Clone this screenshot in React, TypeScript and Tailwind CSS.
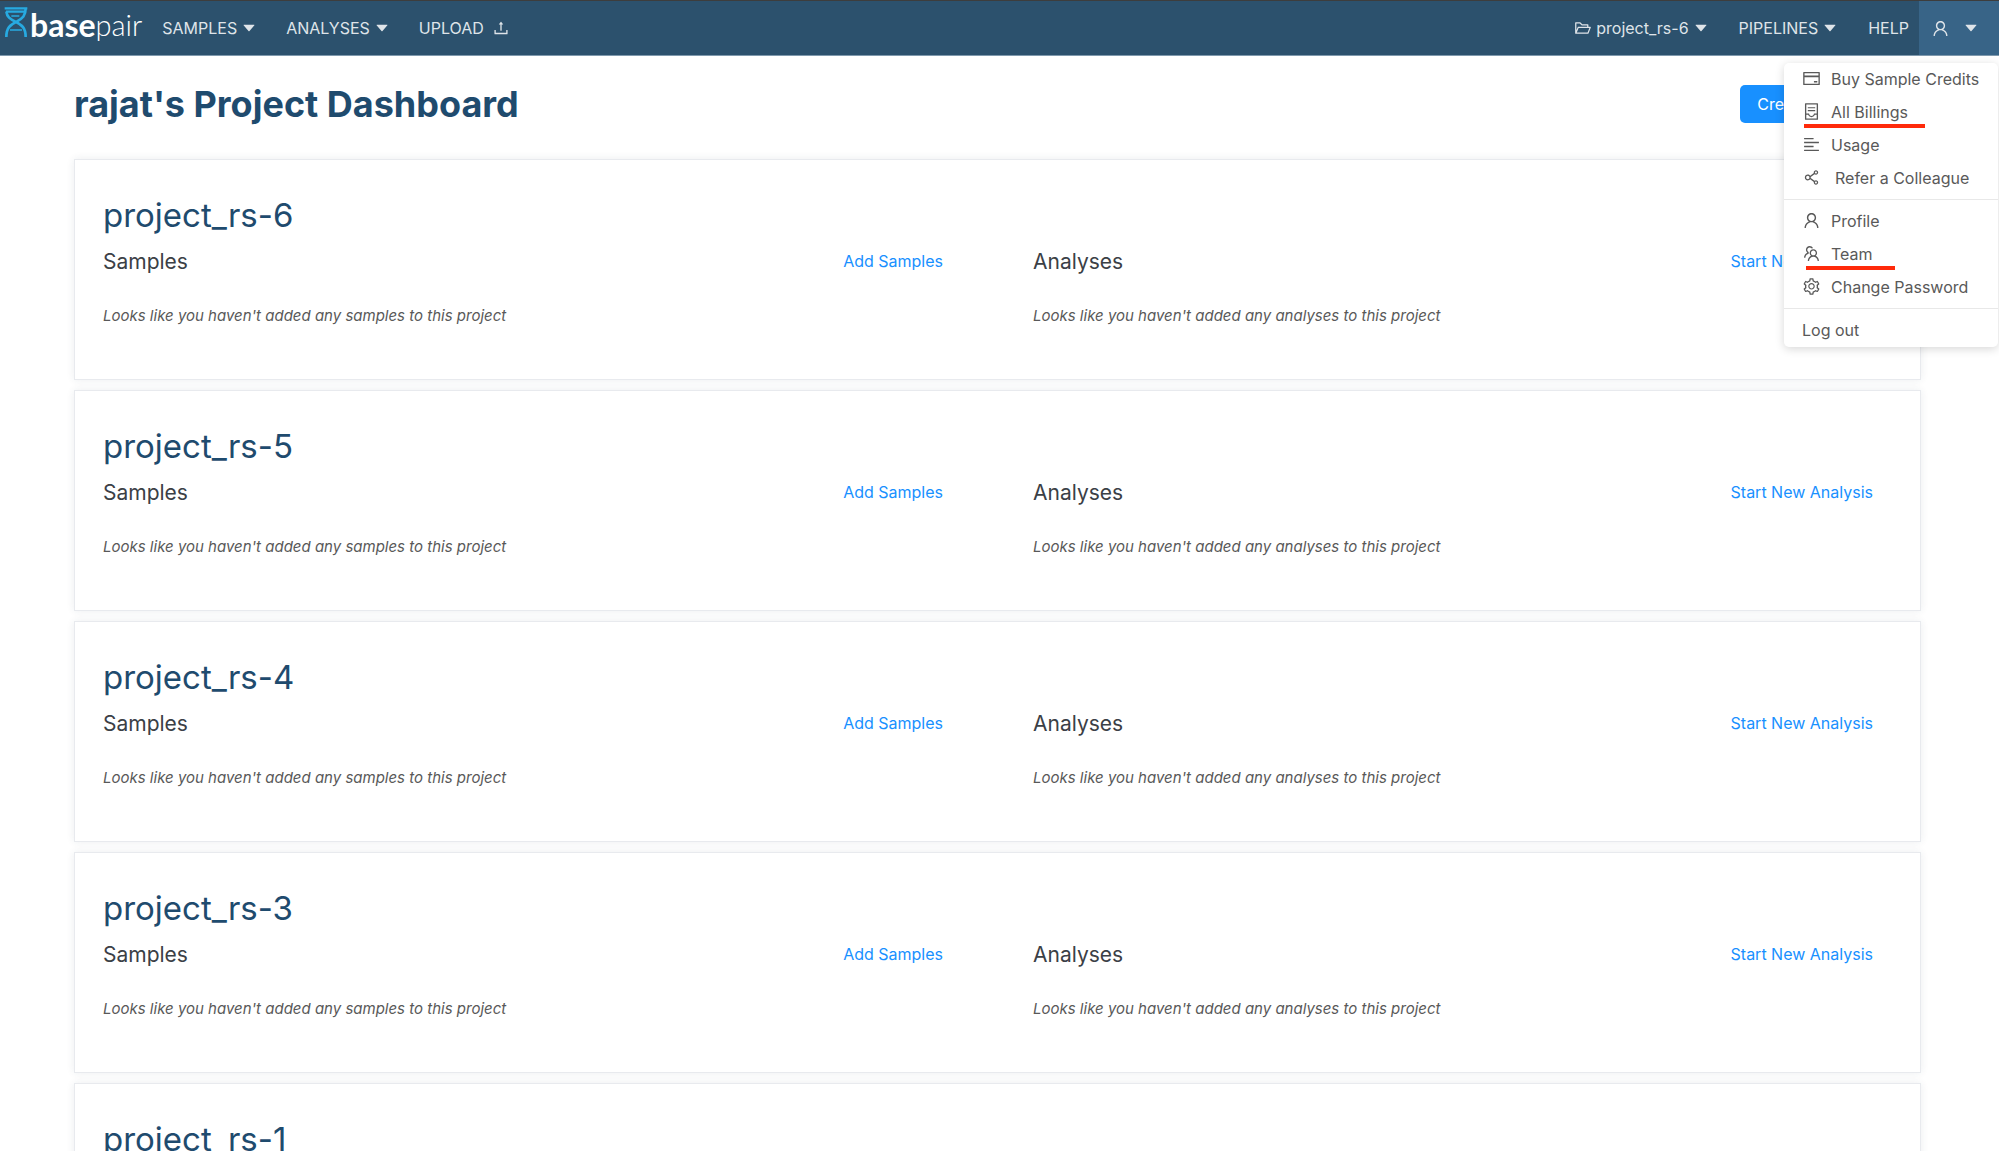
import type { ReactNode } from "react";
import {
  AiFillCaretDown,
  AiOutlineAlignLeft,
  AiOutlineContainer,
  AiOutlineCreditCard,
  AiOutlineFolderOpen,
  AiOutlineSetting,
  AiOutlineShareAlt,
  AiOutlineTeam,
  AiOutlineUpload,
  AiOutlineUser,
} from "react-icons/ai";

const projects = ["project_rs-6", "project_rs-5", "project_rs-4", "project_rs-3", "project_rs-1"];

function Logo() {
  return (
    <a href="#" aria-label="basepair" className="flex h-full items-start pt-1.5 text-white">
      <svg width="24" height="31" viewBox="0 0 72 93" fill="none" stroke="#27aae1" className="shrink-0">
        <path d="M2 4H70M6 14H66" strokeWidth="7" />
        <path d="M22 27H46M18 69H54" strokeWidth="5" />
        <path d="M65 4C65 26 56 34 38 44C18 54 7 62 7 90" strokeWidth="8" />
        <path d="M7 14C9 30 18 36 34 44C54 54 65 62 65 90" strokeWidth="8" />
      </svg>
      <span className="ml-0.5 font-[Lato] text-[32px] leading-9 font-bold">base</span>
      <span className="font-[Lato] text-[29px] leading-9 font-light">pair</span>
    </a>
  );
}

function NavButton({ children, gap = "gap-1" }: { children: ReactNode; gap?: string }) {
  return (
    <button type="button" className={`flex h-full items-center ${gap}`}>
      {children}
    </button>
  );
}

function MenuItem({ icon, label, inset, mark }: { icon?: ReactNode; label: string; inset?: boolean; mark?: string }) {
  return (
    <li className="relative">
      <a href="#" className="flex h-[33px] items-center gap-2.5 pb-0.5 pl-[18px] whitespace-nowrap">
        {icon}
        <span className={inset ? "pl-1" : ""}>{label}</span>
      </a>
      {mark && <span className={`absolute h-1 bg-[#ff2a0a] ${mark}`} />}
    </li>
  );
}

function UserMenu() {
  return (
    <ul className="absolute top-[63px] right-px z-10 w-[214px] rounded-[5px] bg-white text-base text-[#595959] shadow-[0_2px_10px_rgba(0,0,0,0.16)]">
      <MenuItem icon={<AiOutlineCreditCard size={19} />} label="Buy Sample Credits" />
      <MenuItem icon={<AiOutlineContainer size={19} />} label="All Billings" mark="top-7 left-5 w-[121px]" />
      <MenuItem icon={<AiOutlineAlignLeft size={19} />} label="Usage" />
      <MenuItem icon={<AiOutlineShareAlt size={19} />} label="Refer a Colleague" inset />
      <li role="separator" className="mt-1 mb-[5px] h-px bg-[#e8e8e8]" />
      <MenuItem icon={<AiOutlineUser size={19} />} label="Profile" />
      <MenuItem icon={<AiOutlineTeam size={19} />} label="Team" mark="top-7 left-[22px] w-[89px]" />
      <MenuItem icon={<AiOutlineSetting size={19} />} label="Change Password" />
      <li role="separator" className="mt-1 mb-[5px] h-px bg-[#e8e8e8]" />
      <MenuItem label="Log out" />
    </ul>
  );
}

function Section({ title, action, noun }: { title: string; action: string; noun: string }) {
  return (
    <section>
      <div className="flex items-start justify-between">
        <h3 className="text-[21px] leading-7 text-[#3b4046]">{title}</h3>
        <a href="#" className="text-base leading-[26px] text-[#1890ff]">
          {action}
        </a>
      </div>
      <p className="mt-7 text-[15px] leading-6 text-[#595959] italic">
        Looks like you haven't added any {noun} to this project
      </p>
    </section>
  );
}

function ProjectCard({ name }: { name: string }) {
  return (
    <article className="border border-[#e8eaee] bg-white pt-[34px] pr-[47px] pb-[51px] pl-7 shadow-[0_0_8px_rgba(30,60,80,0.09)]">
      <h2 className="text-[33px] leading-[42px] text-[#1f4b6e]">{name}</h2>
      <div className="mt-3 grid grid-cols-2 gap-[90px]">
        <Section title="Samples" action="Add Samples" noun="samples" />
        <Section title="Analyses" action="Start New Analysis" noun="analyses" />
      </div>
    </article>
  );
}

export default function App() {
  return (
    <div className="relative h-screen overflow-hidden bg-white font-[Inter,sans-serif]">
      <header className="flex h-14 items-center border-t border-b border-t-[#3d3d3d] border-b-[#7f99ad] bg-[#2c516d] pl-1 text-base text-[#dfe4e9]">
        <Logo />
        <nav className="ml-5 flex h-full flex-1 items-center gap-[29px]">
          <NavButton>
            SAMPLES <AiFillCaretDown size={16} />
          </NavButton>
          <NavButton>
            ANALYSES <AiFillCaretDown size={16} />
          </NavButton>
          <NavButton gap="gap-2">
            UPLOAD <AiOutlineUpload size={18} />
          </NavButton>
        </nav>
        <nav className="flex h-full items-center gap-[30px]">
          <NavButton>
            <AiOutlineFolderOpen size={18} /> project_rs-6 <AiFillCaretDown size={16} />
          </NavButton>
          <NavButton>
            PIPELINES <AiFillCaretDown size={16} />
          </NavButton>
          <a href="#">HELP</a>
        </nav>
        <button
          type="button"
          aria-label="Account"
          aria-expanded="true"
          className="ml-2.5 flex h-full w-20 items-center justify-between bg-[#386487] pr-5 pl-3"
        >
          <AiOutlineUser size={19} />
          <AiFillCaretDown size={16} />
        </button>
      </header>
      <UserMenu />

      <main className="pt-[26px] pr-[78px] pl-[74px]">
        <div className="flex items-center justify-between">
          <h1 className="text-4xl leading-11 font-bold text-[#1f4b6e]">rajat's Project Dashboard</h1>
          <button type="button" className="h-[38px] rounded-[5px] bg-[#1890ff] px-[17px] text-base text-white">
            Create New Project
          </button>
        </div>
        <div className="mt-[33px] flex flex-col gap-2.5">
          {projects.map((name) => (
            <ProjectCard key={name} name={name} />
          ))}
        </div>
      </main>
    </div>
  );
}
